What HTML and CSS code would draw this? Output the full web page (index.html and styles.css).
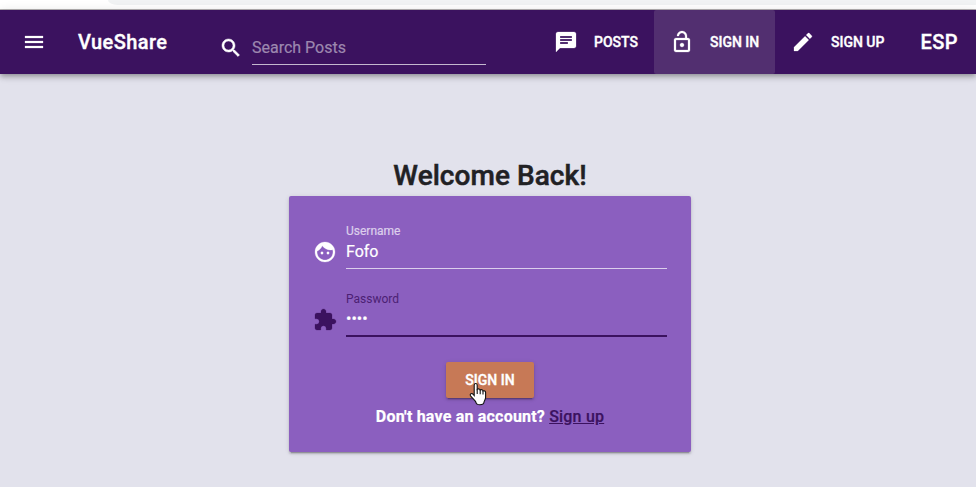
FILE: index.html
```html
<!DOCTYPE html>
<html lang="en">
<head>
<meta charset="utf-8">
<title>VueShare</title>
<link rel="stylesheet" href="styles.css">
</head>
<body>
<div class="browser-edge"><div class="address-bar"></div></div>
<header class="toolbar">
  <svg class="icon menu" viewBox="0 0 24 24"><path d="M3 18h18v-2H3v2zm0-5h18v-2H3v2zm0-7v2h18V6H3z"/></svg>
  <div class="brand">VueShare</div>
  <div class="search">
    <svg class="icon" viewBox="0 0 24 24"><path d="M15.5 14h-.79l-.28-.27C15.41 12.59 16 11.11 16 9.5 16 5.91 13.09 3 9.5 3S3 5.91 3 9.5 5.91 16 9.5 16c1.61 0 3.09-.59 4.23-1.57l.27.28v.79l5 4.99L20.49 19l-4.99-5zm-6 0C7.01 14 5 11.99 5 9.5S7.01 5 9.5 5 14 7.01 14 9.5 11.99 14 9.5 14z"/></svg>
    <div class="search-field">Search Posts</div>
  </div>
  <nav class="nav">
    <a class="nav-item"><svg class="icon" viewBox="0 0 24 24"><path d="M20 2H4c-1.1 0-1.99.9-1.99 2L2 22l4-4h14c1.1 0 2-.9 2-2V4c0-1.1-.9-2-2-2zM6 9h12v2H6V9zm8 5H6v-2h8v2zm4-6H6V6h12v2z"/></svg><span>POSTS</span></a>
    <a class="nav-item active"><svg class="icon" viewBox="0 0 24 24"><path d="M12 17c1.1 0 2-.9 2-2s-.9-2-2-2-2 .9-2 2 .9 2 2 2zm6-9h-1V6c0-2.76-2.24-5-5-5S7 3.24 7 6h1.9c0-1.71 1.39-3.1 3.1-3.1 1.71 0 3.1 1.39 3.1 3.1v2H6c-1.1 0-2 .9-2 2v10c0 1.1.9 2 2 2h12c1.1 0 2-.9 2-2V10c0-1.1-.9-2-2-2zm0 12H6V10h12v10z"/></svg><span>SIGN IN</span></a>
    <a class="nav-item"><svg class="icon" viewBox="0 0 24 24"><path d="M3 17.25V21h3.75L17.81 9.94l-3.75-3.75L3 17.25zM20.71 7.04c.39-.39.39-1.02 0-1.41l-2.34-2.34c-.39-.39-1.02-.39-1.41 0l-1.83 1.83 3.75 3.75 1.83-1.83z"/></svg><span>SIGN UP</span></a>
  </nav>
  <div class="language">ESP</div>
</header>
<main class="page">
  <h1 class="title">Welcome Back!</h1>
  <form class="card">
    <div class="field">
      <svg class="icon" viewBox="0 0 24 24"><path d="M9 11.75c-.69 0-1.25.56-1.25 1.25s.56 1.25 1.25 1.25 1.25-.56 1.25-1.25-.56-1.25-1.25-1.25zm6 0c-.69 0-1.25.56-1.25 1.25s.56 1.25 1.25 1.25 1.25-.56 1.25-1.25-.56-1.25-1.25-1.25zM12 2C6.48 2 2 6.48 2 12s4.48 10 10 10 10-4.48 10-10S17.52 2 12 2zm0 18c-4.41 0-8-3.59-8-8 0-.29.02-.58.05-.86 2.36-1.05 4.23-2.98 5.21-5.37C11.07 8.33 14.05 10 17.42 10c.78 0 1.53-.09 2.25-.26.21.71.33 1.47.33 2.26 0 4.41-3.59 8-8 8z"/></svg>
      <div class="input"><div class="label">Username</div><div class="value">Fofo</div></div>
    </div>
    <div class="field focused">
      <svg class="icon" viewBox="0 0 24 24"><path d="M20.5 11H19V7c0-1.1-.9-2-2-2h-4V3.5C13 2.12 11.88 1 10.5 1S8 2.12 8 3.5V5H4c-1.1 0-1.99.9-1.99 2v3.8H3.5c1.49 0 2.7 1.21 2.7 2.7s-1.21 2.7-2.7 2.7H2V20c0 1.1.9 2 2 2h3.8v-1.5c0-1.49 1.21-2.7 2.7-2.7 1.49 0 2.7 1.21 2.7 2.7V22H17c1.1 0 2-.9 2-2v-4h1.5c1.38 0 2.5-1.12 2.5-2.5S21.88 11 20.5 11z"/></svg>
      <div class="input"><div class="label">Password</div><div class="value">••••</div></div>
    </div>
    <div class="submit">
      <span>SIGN IN</span>
      <svg class="cursor" viewBox="0 0 18 24"><path d="M5.2 13.5V3.2C5.2 .9 8.2 .9 8.2 3.2V7.4C9.3 6.5 10.9 6.9 11.2 8C12.3 7.3 13.7 7.8 14 8.9C15.4 8.3 16.6 9.1 16.6 10.6V15.5C16.6 17.5 15.2 18.6 15 20.3C14.6 23.6 7.4 23.6 7 20.5C6.4 18.2 3.4 16.6 1.5 13.8C.4 11.6 3 10.8 4.2 12.4Z"/><path class="finger" d="M8.2 7.2V12M11.2 8V12.2M14 9V12.5"/></svg>
    </div>
    <p class="signup">Don't have an account? <a>Sign up</a></p>
  </form>
</main>
</body>
</html>
```

FILE: styles.css
```css
* { box-sizing: border-box; }
body {
  margin: 0;
  height: 487px;
  overflow: hidden;
  background: #e2e2ec;
  font-family: Roboto, sans-serif;
  color: #fff;
}
.browser-edge {
  height: 10px;
  padding-left: 108px;
  background: #fff;
  border-bottom: 1px solid #b5b2b3;
}
.address-bar {
  height: 5px;
  background: #f1f3f4;
  border-bottom-left-radius: 10px 5px;
}
.icon { display: block; width: 24px; height: 24px; flex: none; fill: currentColor; stroke: currentColor; stroke-width: .25; }
.toolbar {
  display: flex;
  align-items: center;
  height: 64px;
  padding-left: 22px;
  background: #3b125f;
  box-shadow: 0 2px 4px -1px rgba(0,0,0,.2), 0 4px 5px rgba(0,0,0,.14), 0 1px 10px rgba(0,0,0,.12);
  white-space: nowrap;
}
.brand, .nav, .language, .submit span { -webkit-text-stroke: .35px currentColor; }
.brand { width: 141px; margin-left: 32px; font-size: 20px; font-weight: 500; letter-spacing: .4px; }
.search { display: flex; align-items: flex-end; width: 267px; height: 29px; margin-top: 17px; }
.search .icon { margin-bottom: 5px; stroke-width: .5; }
.search-field {
  width: 234px;
  height: 29px;
  margin-left: 9px;
  border-bottom: 1px solid #c4b8cf;
  font-size: 16px;
  line-height: 24px;
  color: #9d88af;
  -webkit-text-stroke: .2px currentColor;
}
.nav { display: flex; align-self: stretch; margin-left: 52px; font-size: 14px; font-weight: 500; }
.nav-item { display: flex; align-items: center; gap: 16px; padding: 0 16px; border-radius: 2px; }
.active { width: 121px; background: #522f70; }
.language { margin-left: 20px; font-size: 20px; font-weight: 500; letter-spacing: .4px; }
.page { display: flex; flex-direction: column; align-items: center; padding-top: 83px; margin-left: 4px; }
.title { margin: 0; height: 39px; line-height: 38px; font-size: 28px; font-weight: 500; letter-spacing: .05px; color: #212124; -webkit-text-stroke: .5px currentColor; }
.card {
  display: flex;
  flex-direction: column;
  align-items: center;
  width: 402px;
  height: 256px;
  padding: 28px 24px 0;
  border-radius: 2px;
  background: #8b5fbf;
  box-shadow: 0 3px 1px -2px rgba(0,0,0,.2), 0 2px 2px rgba(0,0,0,.14), 0 1px 5px rgba(0,0,0,.12);
}
.field { display: flex; width: 100%; height: 68px; gap: 9px; }
.field .icon { margin-top: 16px; }
.input { flex: 1; height: 45px; border-bottom: 1px solid #dccfec; }
.label { height: 14px; font-size: 12px; line-height: 14px; color: #dccfec; -webkit-text-stroke: .2px currentColor; }
.value { height: 28px; font-size: 16px; line-height: 27px; -webkit-text-stroke: .2px currentColor; }
.focused .icon { color: #3b125f; }
.focused .label { color: #4b2173; -webkit-text-stroke: 0; }
.focused .input { border-bottom: 2px solid #3b125f; }
.focused .value { line-height: 26px; }
.submit {
  position: relative;
  display: flex;
  align-items: center;
  justify-content: center;
  width: 88px;
  height: 36px;
  margin-top: 2px;
  flex: none;
  border-radius: 2px;
  background: #c77956;
  box-shadow: 0 3px 1px -2px rgba(0,0,0,.2), 0 2px 2px rgba(0,0,0,.14), 0 1px 5px rgba(0,0,0,.12);
  font-size: 14px;
  font-weight: 500;
}
.cursor { position: absolute; left: 23px; top: 20px; width: 18px; height: 24px; fill: #fff; stroke: #111; stroke-width: 1.1; }
.finger { fill: none; }
.signup { margin: 9px 0 0; font-size: 16px; font-weight: 700; line-height: 19px; letter-spacing: .2px; -webkit-text-stroke: .2px currentColor; }
.signup a { font-weight: 500; color: #3b125f; text-decoration: underline; }
```
